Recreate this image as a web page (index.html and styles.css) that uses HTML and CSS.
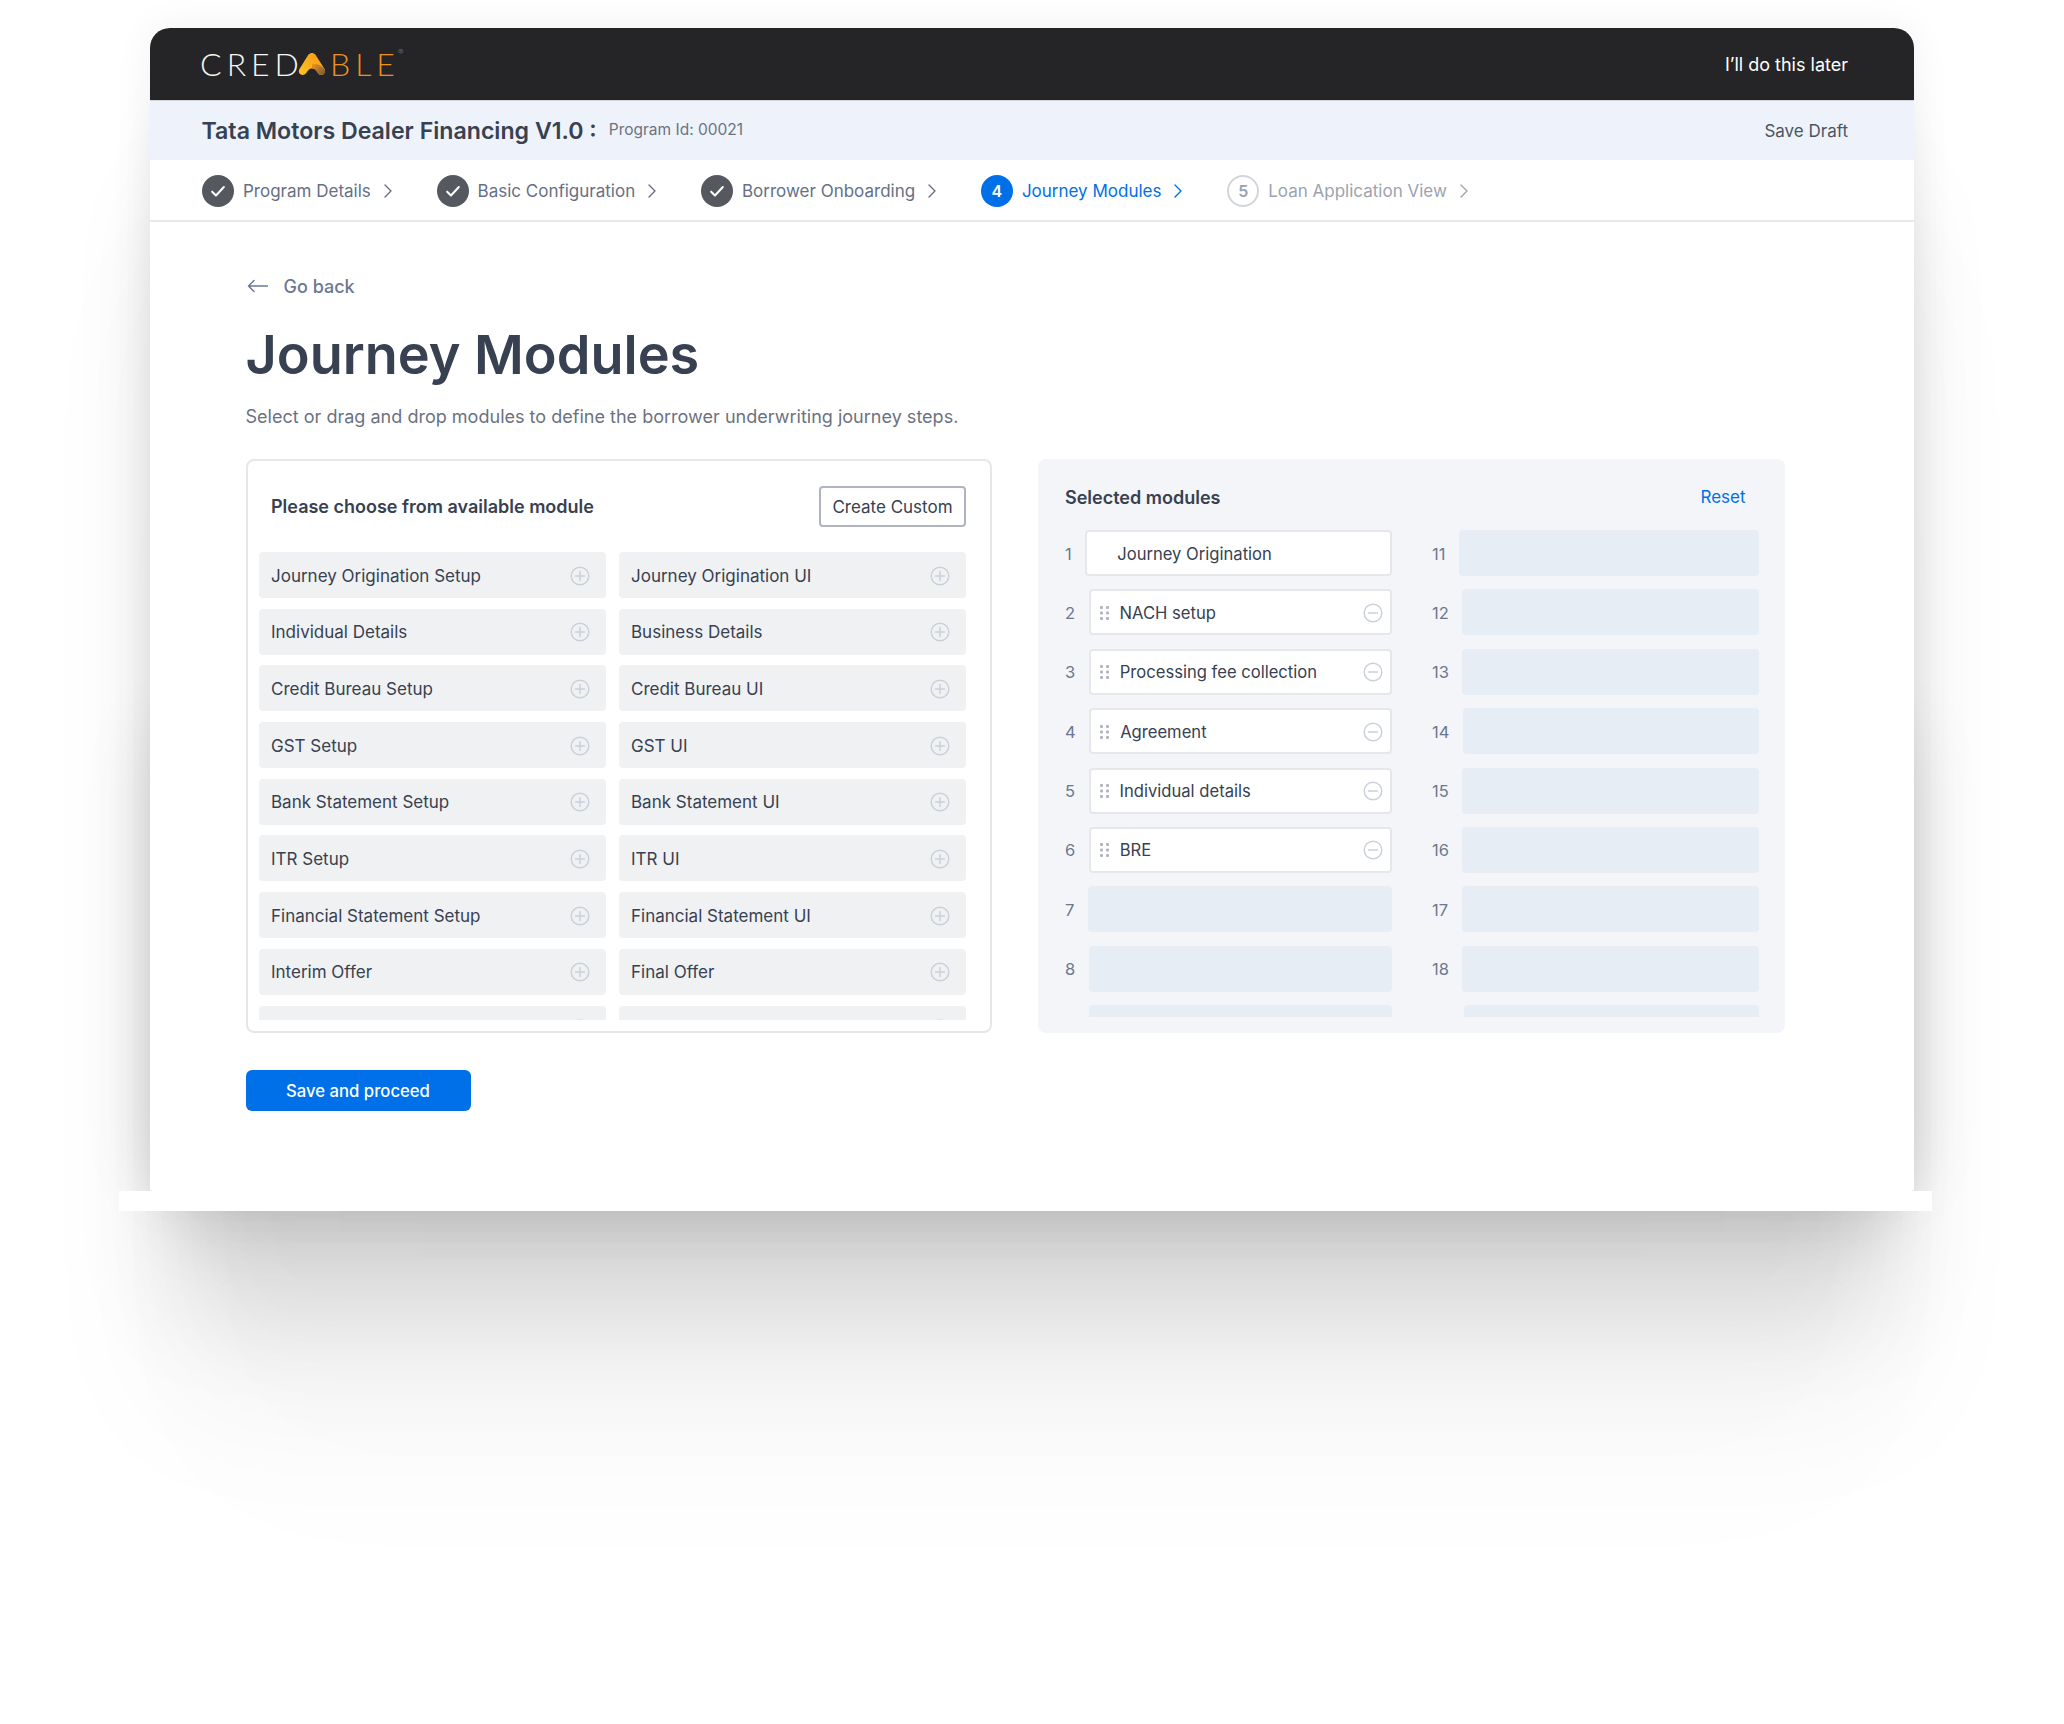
FILE: index.html
```html
<!DOCTYPE html>
<html lang="en">
<head>
<meta charset="utf-8">
<title>Journey Modules</title>
<link rel="stylesheet" href="styles.css">
</head>
<body>
<div class="stage">
  <div class="window">
    <header class="topbar">
      <div class="logo">
        <span class="logo-white">CRED</span>
        <svg class="logo-a" viewBox="0 0 28 24" width="28" height="24" aria-hidden="true">
          <defs>
            <linearGradient id="lg" x1="0" y1="1" x2="1" y2="0"><stop offset="0" stop-color="#fdc61e"/><stop offset="1" stop-color="#f7941d"/></linearGradient>
            <linearGradient id="lg2" x1="0" y1="0" x2="1" y2="1"><stop offset="0" stop-color="#f7941d"/><stop offset="1" stop-color="#6a5a3c"/></linearGradient>
          </defs>
          <path d="M10.5 2.6C12.2.4 15.800.4 17.300 2.600L26.400 16.800C27.800 19 26.600 23 23.400 23C21.400 23 20.300 21.800 19.400 20.300C18 18.200 16.500 16.500 14 16.500C10.800 16.500 9.800 19 8.300 21C7.300 22.300 5.900 23 4.400 23C1.400 23 -.200 19.800 1.500 17Z" fill="url(#lg)"/>
          <path d="M14 12C19 11 22 13 26.400 16.800C27.800 19 26.600 23 23.400 23C21.400 23 20.300 21.800 19.400 20.300C18 18.200 16.500 16.500 14 16.500Z" fill="url(#lg2)"/>
        </svg>
        <span class="logo-orange">BLE</span><sup class="logo-reg">®</sup>
      </div>
      <a class="later">I’ll do this later</a>
    </header>

    <div class="program">
      <div class="program-left">
        <span class="program-name">Tata Motors Dealer Financing V1.0 :</span>
        <span class="program-id">Program Id: 00021</span>
      </div>
      <a class="draft">Save Draft</a>
    </div>

    <nav class="steps">
      <div class="step">
        <span class="dot dot-done"><svg viewBox="0 0 16 16" width="18" height="18"><path d="M2.800 8.600l3.400 3.400 7-7.600" fill="none" stroke="#fff" stroke-width="1.800" stroke-linecap="round" stroke-linejoin="round"/></svg></span>
        <span class="step-label">Program Details</span>
        <svg class="chev" viewBox="0 0 10 16" width="10" height="16"><path d="M2 2l6 6-6 6" fill="none" stroke="currentColor" stroke-width="1.400" stroke-linecap="round" stroke-linejoin="round"/></svg>
      </div>
      <div class="step">
        <span class="dot dot-done"><svg viewBox="0 0 16 16" width="18" height="18"><path d="M2.800 8.600l3.400 3.400 7-7.600" fill="none" stroke="#fff" stroke-width="1.800" stroke-linecap="round" stroke-linejoin="round"/></svg></span>
        <span class="step-label">Basic Configuration</span>
        <svg class="chev" viewBox="0 0 10 16" width="10" height="16"><path d="M2 2l6 6-6 6" fill="none" stroke="currentColor" stroke-width="1.400" stroke-linecap="round" stroke-linejoin="round"/></svg>
      </div>
      <div class="step">
        <span class="dot dot-done"><svg viewBox="0 0 16 16" width="18" height="18"><path d="M2.800 8.600l3.400 3.400 7-7.600" fill="none" stroke="#fff" stroke-width="1.800" stroke-linecap="round" stroke-linejoin="round"/></svg></span>
        <span class="step-label">Borrower Onboarding</span>
        <svg class="chev" viewBox="0 0 10 16" width="10" height="16"><path d="M2 2l6 6-6 6" fill="none" stroke="currentColor" stroke-width="1.400" stroke-linecap="round" stroke-linejoin="round"/></svg>
      </div>
      <div class="step step-active">
        <span class="dot dot-active">4</span>
        <span class="step-label">Journey Modules</span>
        <svg class="chev" viewBox="0 0 10 16" width="10" height="16"><path d="M2 2l6 6-6 6" fill="none" stroke="currentColor" stroke-width="1.400" stroke-linecap="round" stroke-linejoin="round"/></svg>
      </div>
      <div class="step step-next">
        <span class="dot dot-next">5</span>
        <span class="step-label">Loan Application View</span>
        <svg class="chev" viewBox="0 0 10 16" width="10" height="16"><path d="M2 2l6 6-6 6" fill="none" stroke="currentColor" stroke-width="1.400" stroke-linecap="round" stroke-linejoin="round"/></svg>
      </div>
    </nav>

    <main class="content">
      <a class="back">
        <svg viewBox="0 0 22 14" width="22" height="14"><path d="M21.500 7H2.500M8 1.500L2.500 7 8 12.500" fill="none" stroke="#6b7890" stroke-width="1.500" stroke-linecap="round" stroke-linejoin="round"/></svg>
        <span>Go back</span>
      </a>
      <h1 class="title">Journey Modules</h1>
      <p class="subtitle">Select or drag and drop modules to define the borrower underwriting journey steps.</p>

      <div class="panels">
        <section class="card">
          <div class="card-head">
            <h2 class="card-title">Please choose from available module</h2>
            <button class="btn-outline">Create Custom</button>
          </div>
          <div class="module-scroll">
            <div class="module-grid" id="modules"></div>
          </div>
        </section>

        <section class="selected">
          <div class="selected-head">
            <h2 class="selected-title">Selected modules</h2>
            <a class="reset">Reset</a>
          </div>
          <div class="selected-scroll">
            <div class="selected-grid" id="slots"></div>
          </div>
        </section>
      </div>

      <button class="btn-primary">Save and proceed</button>
    </main>
  </div>
  <div class="ledge"></div>
</div>
<script src="app.js"></script>
</body>
</html>
```

FILE: app.js
```js
var modules = ["Journey Origination Setup","Journey Origination UI","Individual Details","Business Details","Credit Bureau Setup","Credit Bureau UI","GST Setup","GST UI","Bank Statement Setup","Bank Statement UI","ITR Setup","ITR UI","Financial Statement Setup","Financial Statement UI","Interim Offer","Final Offer",null,null];
var plus = '<svg class="ico" viewBox="0 0 20 20" width="20" height="20"><circle cx="10" cy="10" r="8.800" fill="none" stroke="#cbd0da" stroke-width="1.500"/><path d="M10 5.500v9M5.500 10h9" fill="none" stroke="#cbd0da" stroke-width="1.500" stroke-linecap="round"/></svg>';
var minus = '<svg class="ico" viewBox="0 0 20 20" width="20" height="20"><circle cx="10" cy="10" r="8.800" fill="none" stroke="#cbd0da" stroke-width="1.500"/><path d="M5.500 10h9" fill="none" stroke="#cbd0da" stroke-width="1.500" stroke-linecap="round"/></svg>';
var grip = '<svg class="grip" viewBox="0 0 9 14" width="9" height="14"><g fill="#b0b5c1"><rect x="0" y="0" width="3" height="3" rx="1"/><rect x="6" y="0" width="3" height="3" rx="1"/><rect x="0" y="5.500" width="3" height="3" rx="1"/><rect x="6" y="5.500" width="3" height="3" rx="1"/><rect x="0" y="11" width="3" height="3" rx="1"/><rect x="6" y="11" width="3" height="3" rx="1"/></g></svg>';
var html = "";
modules.forEach(function (m) {
  html += '<div class="module">' + (m ? '<span>' + m + '</span>' : '<span></span>') + plus + '</div>';
});
document.getElementById("modules").innerHTML = html;

var filled = {1:"Journey Origination",2:"NACH setup",3:"Processing fee collection",4:"Agreement",5:"Individual details",6:"BRE"};
var nums = [1,11,2,12,3,13,4,14,5,15,6,16,7,17,8,18,9,19];
var s = "";
nums.forEach(function (n) {
  var box, num;
  if (n === 1) box = '<div class="slot slot-fixed"><span>' + filled[1] + '</span></div>';
  else if (filled[n]) box = '<div class="slot slot-filled">' + grip + '<span class="slot-text">' + filled[n] + '</span>' + minus + '</div>';
  else box = '<div class="slot slot-empty"></div>';
  if (n === 9) num = '<span class="slot-num slot-num-one"></span>';
  else if (n === 19) num = '<span class="slot-num slot-num-two"></span>';
  else num = '<span class="slot-num">' + n + '</span>';
  s += '<div class="slot-row">' + num + box + '</div>';
});
document.getElementById("slots").innerHTML = s;
```

FILE: styles.css
```css
* { box-sizing: border-box; }
html, body { margin: 0; padding: 0; background: #fff; }
body { font-family: Inter, "Liberation Sans", sans-serif; color: #374151; width: 2064px; height: 1724px; overflow: hidden; }
a { text-decoration: none; }
h1, h2, p { margin: 0; }

.stage { padding: 28px 150px 0; position: relative; z-index: 0; }
.window {
  height: 1163px; background: #fff; border-radius: 20px 20px 3px 3px; display: flex; flex-direction: column; position: relative;
  box-shadow:
    0 0 40px rgba(0,0,0,.06),
    0 60px 60px -22px rgba(0,0,0,.10),
    0 140px 100px -25px rgba(0,0,0,.11),
    0 230px 140px -20px rgba(0,0,0,.05),
    0 340px 200px -30px rgba(0,0,0,.012);
}
.window::before { content: ""; position: absolute; z-index: -1; left: 0; right: 0; top: 700px; bottom: 10px; box-shadow: 0 0 70px rgba(0,0,0,.09); }
.ledge { height: 20px; margin: 0 -18px 0 -31px; background: #fff; position: relative; }

.topbar { height: 73px; flex: none; background: #252527; border-radius: 20px 20px 0 0; border-bottom: 1px solid #d1d5db; display: flex; align-items: center; justify-content: space-between; padding: 0 66px 0 50px; }
.logo { display: flex; align-items: center; font-family: Lato, sans-serif; font-weight: 300; font-size: 32px; line-height: 1; letter-spacing: 5px; }
.logo-white { color: #f6f6f6; }
.logo-orange { color: #f0901f; margin-left: 4px; letter-spacing: 5px; }
.logo-a { margin-left: -6px; flex: none; }
.logo-reg { font-size: 8px; color: #777; letter-spacing: 0; align-self: flex-start; margin: 0 0 0 -2px; line-height: 1; font-family: Inter, sans-serif; }
.later { color: #fff; font-size: 18px; }

.program { height: 59px; flex: none; background: #eef3fb; display: flex; align-items: center; justify-content: space-between; padding: 0 66px 0 51.500px; }
.program-left { display: flex; align-items: center; gap: 12px; }
.program-name { font-size: 23.150px; font-weight: 600; color: #374151; }
.program-id { font-size: 15.500px; color: #6b7280; margin-top: -2px; }
.draft { font-size: 17px; color: #4b5563; }

.steps { height: 62px; flex: none; border-bottom: 2px solid #e5e7eb; display: flex; align-items: center; gap: 43.750px; padding: 2px 0 0 52px; }
.step { display: flex; align-items: center; color: #667085; font-size: 17px; }
.step-label { margin-left: 9px; }
.chev { margin-left: 12px; flex: none; }
.dot { width: 32px; height: 32px; border-radius: 50%; display: flex; align-items: center; justify-content: center; flex: none; font-size: 16px; font-weight: 600; }
.dot-done { background: #55585e; }
.dot-active { background: #0070e8; color: #fff; }
.dot-next { border: 2px solid #d1d5db; color: #9ca3af; }
.step-active { color: #0070e8; }
.step-next { color: #9ca3af; }

.content { flex: 1; padding: 52px 0 0 95.500px; }
.back { display: flex; align-items: center; gap: 16px; color: #6b7890; font-size: 18px; font-weight: 500; height: 24px; }
.title { font-size: 54px; font-weight: 600; color: #374151; line-height: 68px; margin-top: 23px; }
.subtitle { font-size: 18.050px; color: #6b7280; line-height: 28px; margin-top: 13.500px; }

.panels { display: flex; gap: 46px; margin-top: 28.500px; width: 1539px; }
.card { width: 746.500px; height: 574px; flex: none; border: 2px solid #e5e7eb; border-radius: 8px; padding: 0 24px 0 11.500px; }
.card-head { display: flex; align-items: center; justify-content: space-between; height: 91px; padding-left: 12px; }
.card-title { font-size: 18px; font-weight: 600; color: #374151; }
.btn-outline { height: 41px; width: 147px; border: 2px solid #b0b4c0; border-radius: 4px; background: #fff; color: #374151; font: 400 17px Inter, sans-serif; padding: 0; }
.module-scroll { height: 467.500px; overflow: hidden; }
.module-grid { display: grid; grid-template-columns: 347px 347px; column-gap: 13px; row-gap: 10.700px; }
.module { height: 46px; background: #f0f1f3; border-radius: 4px; display: flex; align-items: center; justify-content: space-between; padding: 1px 16.500px 0 12px; font-size: 17px; color: #374151; }
.ico { flex: none; display: block; }

.selected { width: 746.500px; height: 574px; flex: none; background: #f3f5f8; border-radius: 8px; padding: 0 25px 0 27px; }
.selected-head { display: flex; align-items: center; justify-content: space-between; height: 71px; padding: 5px 14px 0 0; }
.selected-title { font-size: 18px; font-weight: 600; color: #374151; }
.reset { color: #0070e8; font-size: 17px; }
.selected-scroll { height: 487px; overflow: hidden; }
.selected-grid { display: grid; grid-template-columns: 326.500px 326.500px; column-gap: 40.500px; row-gap: 13.400px; }
.slot-row { display: flex; align-items: center; gap: 13.500px; height: 46px; }
.slot-num { font-size: 16.500px; color: #6b7890; flex: none; padding-top: 1px; }
.slot-num-one { width: 10px; }
.slot-num-two { width: 18px; }
.slot { flex: 1; height: 46px; border-radius: 4px; min-width: 0; display: flex; align-items: center; font-size: 16.600px; color: #374151; }
.slot-fixed { background: #fff; border: 2px solid #e5e7eb; padding: 1px 0 0 30px; }
.slot-filled { background: #fff; border: 2px solid #e5e7eb; padding: 1px 7px 0 9px; }
.slot-text { flex: 1; margin-left: 11px; }
.slot-empty { background: #e7edf5; }
.grip { flex: none; }

.btn-primary { display: block; margin-top: 37px; width: 225px; height: 41px; border: 0; border-radius: 6px; background: #0070e8; color: #fff; font: 500 16.700px Inter, sans-serif; }
```
